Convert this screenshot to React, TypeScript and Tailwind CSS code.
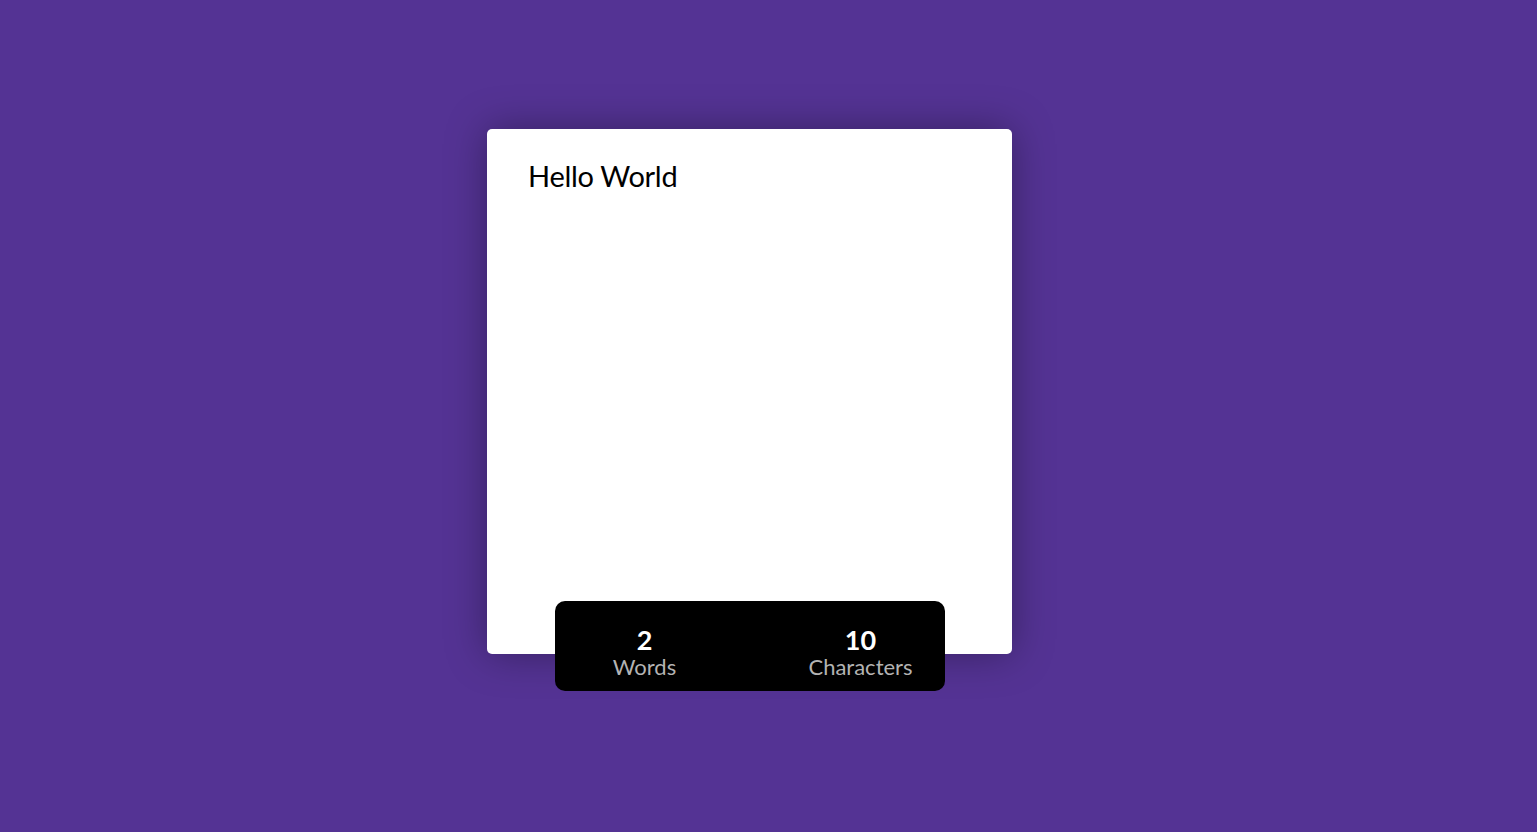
import React from "react";

export default function App() {
  return (
    <div
      className="min-h-[832px] w-full bg-[#543394] flex flex-col items-center pt-[129px] pr-[38px]"
      style={{ fontFamily: "Lato, 'Noto Sans', sans-serif" }}
    >
      <div className="w-[525px] h-[525px] bg-white rounded-[5px] shadow-[0_0_40px_rgba(0,0,0,0.35)] pl-[41px] pr-[40px] pt-[28px]">
        <div className="text-[29px] leading-[38px] text-black tracking-[-0.3px]">Hello World</div>
      </div>
      <div className="relative -mt-[53px] w-[390px] h-[90px] bg-black rounded-[10px] flex justify-between pl-[30px] pr-[24px] pt-[25px]">
        <div className="w-[120px] flex flex-col items-center">
          <div className="text-[27px] leading-[28px] font-bold text-white">2</div>
          <div className="text-[22px] leading-[26px] text-[#b3b3b3]">Words</div>
        </div>
        <div className="w-[120px] flex flex-col items-center">
          <div className="text-[27px] leading-[28px] font-bold text-white">10</div>
          <div className="text-[22px] leading-[26px] text-[#b3b3b3]">Characters</div>
        </div>
      </div>
    </div>
  );
}
